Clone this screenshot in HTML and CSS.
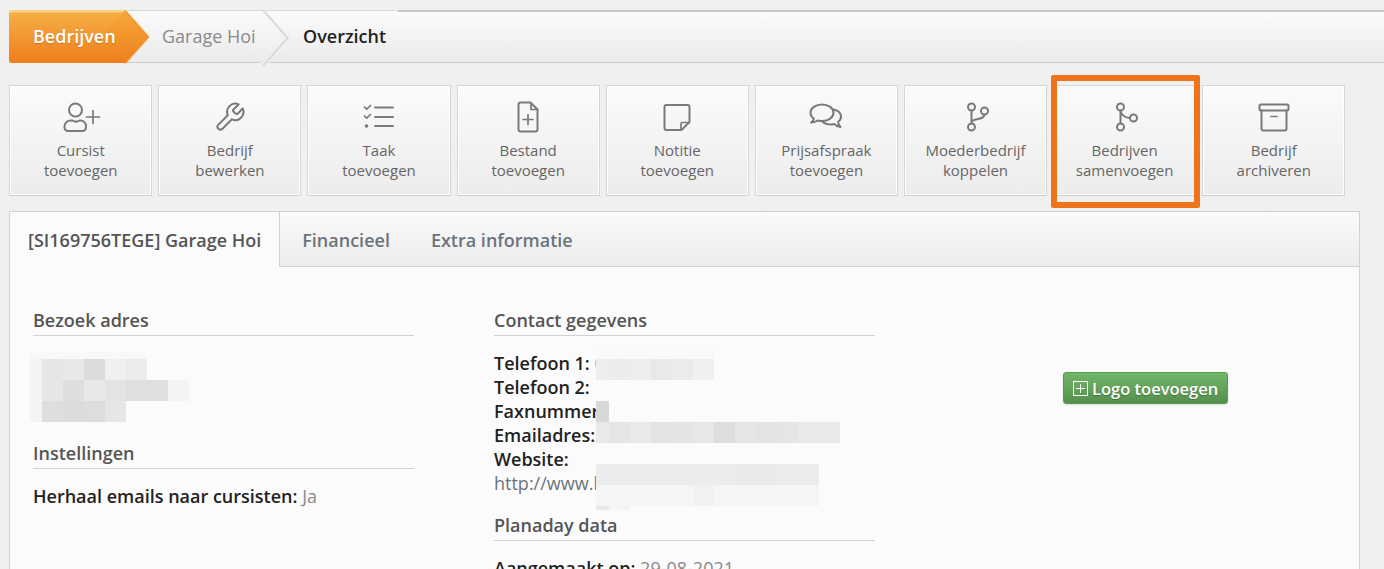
FILE: index.html
```html
<!DOCTYPE html>
<html lang="nl">
<head>
<meta charset="utf-8">
<title>Garage Hoi - Overzicht</title>
<link rel="stylesheet" href="styles.css">
</head>
<body>
<nav class="crumbs">
  <a class="crumb crumb-home">Bedrijven</a>
  <a class="crumb crumb-mid">Garage Hoi</a>
  <span class="crumb crumb-now">Overzicht</span>
</nav>

<div class="actions">
  <a class="action">
    <svg class="ico" viewBox="0 0 40 32"><circle cx="14.500" cy="9" r="6.500"/><path d="M7 30h14.500a3.500 3.500 0 0 0 3.500-3.500V25a5.500 5.500 0 0 0-5.500-5.500h-1c-2 1.300-5 1.300-7 0h-1.500A6 6 0 0 0 3.500 25v1.500A3.500 3.500 0 0 0 7 30z"/><path class="thin" d="M32 9.500v13M25.500 16h13"/></svg>
    <span>Cursist<br>toevoegen</span>
  </a>
  <a class="action">
    <svg class="ico" viewBox="0 0 40 32"><g transform="translate(3.500 0) scale(1.36)"><path class="w15" d="M14.700 6.300a1 1 0 0 0 0 1.400l1.600 1.600a1 1 0 0 0 1.400 0l3.770-3.770a6 6 0 0 1-7.940 7.940l-6.910 6.910a2.120 2.120 0 0 1-3-3l6.910-6.910a6 6 0 0 1 7.940-7.940l-3.760 3.760z"/></g></svg>
    <span>Bedrijf<br>bewerken</span>
  </a>
  <a class="action">
    <svg class="ico" viewBox="0 0 40 32"><path d="M16 6.500h18M16 16h18M16 25h18"/><path class="thin" d="M5.500 6l2.200 2.200L11.500 4.500M5.500 15l2.200 2.200L11.500 13.500"/><circle class="dot" cx="7.500" cy="25" r="1.800"/></svg>
    <span>Taak<br>toevoegen</span>
  </a>
  <a class="action">
    <svg class="ico" viewBox="0 0 40 32"><path d="M12.500 1.500h10l7 7v20a2 2 0 0 1-2 2h-15a2 2 0 0 1-2-2v-25a2 2 0 0 1 2-2z"/><path class="thin" d="M23 2v6.500h6.500M20 13.500v10M15 18.500h10"/></svg>
    <span>Bestand<br>toevoegen</span>
  </a>
  <a class="action">
    <svg class="ico" viewBox="0 0 40 32"><path d="M9.500 4h21a2 2 0 0 1 2 2v15l-8 8h-15a2 2 0 0 1-2-2V6a2 2 0 0 1 2-2z"/><path class="thin" d="M32 21.500h-6.500a1.500 1.500 0 0 0-1.500 1.500v6"/></svg>
    <span>Notitie<br>toevoegen</span>
  </a>
  <a class="action">
    <svg class="ico" viewBox="0 0 40 32"><path d="M16 3.500c-6.500 0-11.500 3.700-11.500 8.300 0 2.400 1.300 4.500 3.400 6-.3 1.400-1.400 2.800-2.900 3.700 2.500 0 4.800-.8 6.600-2 1.400.4 2.900.6 4.400.6 6.500 0 11.500-3.700 11.500-8.300S22.500 3.500 16 3.500z"/><path d="M27.800 8.500c4.200 1 7.200 3.900 7.200 7.300 0 2.100-1.100 3.900-2.900 5.200.2 1.900 1 3.500 2.400 5-2.500-.3-4.600-1.400-6.200-3-1.200.3-2.500.5-3.800.5-3 0-5.700-.9-7.600-2.400"/></svg>
    <span>Prijsafspraak<br>toevoegen</span>
  </a>
  <a class="action">
    <svg class="ico" viewBox="0 0 40 32"><circle cx="15.500" cy="6" r="3.500"/><circle cx="15.500" cy="26" r="3.500"/><circle cx="28.500" cy="10" r="3.500"/><path d="M15.500 9.500v13M15.500 21c1-2 3-2.500 5.500-2.800 4-.5 7-1.500 7.500-4.700"/></svg>
    <span>Moederbedrijf<br>koppelen</span>
  </a>
  <a class="action action-marked">
    <svg class="ico" viewBox="0 0 40 32"><circle cx="15.500" cy="6" r="3.500"/><circle cx="15.500" cy="26" r="3.500"/><circle cx="28.500" cy="17" r="3.500"/><path d="M15.500 9.500v13M15.500 9.500c.5 4 4 7 9.500 7.500"/></svg>
    <span>Bedrijven<br>samenvoegen</span>
    <i class="marker"></i>
  </a>
  <a class="action">
    <svg class="ico" viewBox="0 0 40 32"><rect x="5.500" y="3.500" width="29" height="6" rx="1.500"/><path d="M7.500 9.500v18a2 2 0 0 0 2 2h21a2 2 0 0 0 2-2v-18"/><path class="thin" d="M17 15.500h6"/></svg>
    <span>Bedrijf<br>archiveren</span>
  </a>
</div>

<section class="panel">
  <header class="tabs">
    <a class="tab tab-active">[SI169756TEGE] Garage Hoi</a>
    <a class="tab">Financieel</a>
    <a class="tab tab-last">Extra informatie</a>
  </header>
  <div class="panel-body">
    <div class="col">
      <h3 class="title">Bezoek adres</h3>
      <div class="address">
        <svg class="mosaic" width="159" height="70" shape-rendering="crispEdges">
          <rect width="117" height="7" fill="#f8f8f8"/>
          <rect y="7" width="12" height="63" fill="#f3f3f3"/>
          <rect x="12" y="7" width="21" height="21" fill="#e6e6e6"/>
          <rect x="33" y="7" width="21" height="21" fill="#e8e8e8"/>
          <rect x="54" y="7" width="21" height="21" fill="#dcdcdc"/>
          <rect x="75" y="7" width="21" height="21" fill="#f0f0f0"/>
          <rect x="96" y="7" width="21" height="21" fill="#ebebeb"/>
          <rect x="12" y="28" width="21" height="21" fill="#e6e6e6"/>
          <rect x="33" y="28" width="21" height="21" fill="#dedede"/>
          <rect x="54" y="28" width="21" height="21" fill="#e8e8e8"/>
          <rect x="75" y="28" width="21" height="21" fill="#e3e3e3"/>
          <rect x="96" y="28" width="42" height="21" fill="#dfdfdf"/>
          <rect x="138" y="28" width="21" height="21" fill="#f4f4f4"/>
          <rect x="12" y="49" width="21" height="21" fill="#dedede"/>
          <rect x="33" y="49" width="21" height="21" fill="#dcdcdc"/>
          <rect x="54" y="49" width="21" height="21" fill="#dddddd"/>
          <rect x="75" y="49" width="21" height="21" fill="#e6e6e6"/>
        </svg>
      </div>
      <h3 class="title">Instellingen</h3>
      <p class="row row-first"><b>Herhaal emails naar cursisten:</b> Ja</p>
    </div>

    <div class="col col-contact">
      <h3 class="title">Contact gegevens</h3>
      <div class="contact">
        <p class="row"><b>Telefoon 1:</b> 0</p>
        <p class="row"><b>Telefoon 2:</b></p>
        <p class="row"><b>Faxnummer:</b></p>
        <p class="row"><b>Emailadres:</b></p>
        <p class="row"><b>Website:</b></p>
        <p class="row"><a class="link">http://www.l</a></p>
        <svg class="mosaic mosaic-contact" width="244" height="160" shape-rendering="crispEdges">
          <rect y="0" width="118" height="8" fill="#f9f9f9"/>
          <rect y="8" width="13" height="21" fill="#eeeeee"/>
          <rect x="13" y="8" width="21" height="21" fill="#ececec"/>
          <rect x="34" y="8" width="21" height="21" fill="#eeeeee"/>
          <rect x="55" y="8" width="21" height="21" fill="#e9e9e9"/>
          <rect x="76" y="8" width="21" height="21" fill="#ebebeb"/>
          <rect x="97" y="8" width="21" height="21" fill="#f0f0f0"/>
          <rect y="29" width="13" height="21" fill="#fbfbfb"/>
          <rect y="50" width="13" height="21" fill="#d8d8d8"/>
          <rect y="71" width="13" height="21" fill="#e8e9e9"/>
          <rect x="13" y="71" width="21" height="21" fill="#e4e5e6"/>
          <rect x="34" y="71" width="21" height="21" fill="#e8e9e9"/>
          <rect x="55" y="71" width="21" height="21" fill="#e2e3e4"/>
          <rect x="76" y="71" width="21" height="21" fill="#e3e4e5"/>
          <rect x="97" y="71" width="21" height="21" fill="#e6e7e8"/>
          <rect x="118" y="71" width="21" height="21" fill="#dcddde"/>
          <rect x="139" y="71" width="21" height="21" fill="#e4e5e6"/>
          <rect x="160" y="71" width="21" height="21" fill="#e2e3e4"/>
          <rect x="181" y="71" width="21" height="21" fill="#e4e5e6"/>
          <rect x="202" y="71" width="21" height="21" fill="#e9eaea"/>
          <rect x="223" y="71" width="21" height="21" fill="#e8e9ea"/>
          <rect x="76" y="92" width="63" height="21" fill="#fbfbfb"/>
          <rect y="113" width="223" height="21" fill="#ebecee"/>
          <rect x="139" y="113" width="42" height="21" fill="#e8e9eb"/>
          <rect y="134" width="223" height="21" fill="#f4f5f5"/>
          <rect x="97" y="134" width="21" height="21" fill="#f0f1f3"/>
          <rect y="155" width="13" height="4" fill="#e8e8e8"/>
          <rect x="13" y="155" width="21" height="4" fill="#f4f4f4"/>
        </svg>
      </div>
      <h3 class="title">Planaday data</h3>
      <p class="row row-first"><b>Aangemaakt op:</b> 29-08-2021</p>
    </div>

    <div class="col col-logo">
      <a class="logo-btn">
        <svg class="logo-ico" viewBox="0 0 15 15"><rect x=".5" y=".5" width="14" height="14"/><path d="M7.500 3v9M3 7.500h9"/></svg>
        Logo toevoegen
      </a>
    </div>
  </div>
</section>
</body>
</html>
```

FILE: styles.css
```css
* { box-sizing: border-box; }
html, body { height: 100%; overflow: hidden; }
body {
  margin: 0;
  padding-top: 10px;
  background: #f0f0f0;
  font-family: "Open Sans", "Liberation Sans", sans-serif;
  color: #222;
}
p, h3 { margin: 0; }

/* breadcrumb */
.crumbs {
  display: flex;
  height: 53px;
  margin-left: 9px;
  background: linear-gradient(#fbfbfb, #ebebeb);
  border-top: 1px solid #d8d8d8;
  border-bottom: 1px solid #cfcfcf;
  font-size: 18px;
  line-height: 51px;
}
.crumb { position: relative; display: block; white-space: nowrap; }
.crumb-home {
  z-index: 2;
  margin: -1px 0;
  height: 53px;
  line-height: 53px;
  padding: 0 0 0 24px;
  width: 116px;
  background: linear-gradient(#fcd27e 0, #fcd27e 2px, #f7ae46 3px, #ee7d1c 100%);
  border-radius: 3px 0 0 3px;
  color: #fff;
  font-weight: 600;
  text-shadow: 0 1px 1px rgba(150, 80, 0, .4);
}
.crumb-home::after {
  content: "";
  position: absolute;
  z-index: -1;
  top: 7.500px;
  right: -19px;
  width: 38px;
  height: 38px;
  background: linear-gradient(135deg, #f6a93b, #ee7f1d);
  box-shadow: 1px -1px 0 #f8b669, inset -1px 1px 0 #ef8c2a;
  transform: scaleX(.88) rotate(45deg);
}
.crumb-mid {
  z-index: 1;
  width: 140px;
  padding-left: 37px;
  color: #8a8a8a;
}
.crumb-mid::after {
  content: "";
  position: absolute;
  z-index: -1;
  top: 6.500px;
  right: -19px;
  width: 38px;
  height: 38px;
  background: linear-gradient(135deg, #fbfbfb, #ebebeb);
  border-top: 2px solid #d8d8d8;
  border-right: 2px solid #d8d8d8;
  box-shadow: 1px -1px 0 #f4f4f4;
  transform: scaleX(.88) rotate(45deg);
}
.crumb-now {
  flex: 1;
  padding-left: 38px;
  color: #222;
  font-weight: 600;
}
.crumb-now::after {
  content: "";
  position: absolute;
  top: -1px;
  left: 133px;
  right: 0;
  height: 2px;
  background: #c6c6c6;
}

/* action buttons */
.actions {
  display: flex;
  gap: 6px;
  margin: 22px 0 0 9.200px;
}
.action {
  position: relative;
  flex: 0 0 143.125px;
  height: 111px;
  padding-top: 15px;
  text-align: center;
  background: linear-gradient(#fbfbfb, #ececec);
  border: 1px solid #d6d6d6;
  border-bottom-color: #cfcfcf;
  box-shadow: inset 1px 1px 0 #fff, inset -1px -1px 0 #fff;
  color: #666;
  font-size: 15px;
  line-height: 20px;
}
.action span { display: block; margin-top: 7px; }
.ico {
  display: block;
  width: 40px;
  height: 32px;
  margin: 0 auto;
  fill: none;
  stroke: #7a7a7a;
  stroke-width: 2;
  stroke-linecap: round;
  stroke-linejoin: round;
}
.ico .thin { stroke-width: 1.700; }
.ico .w15 { stroke-width: 1.500; }
.ico .dot { fill: #7a7a7a; stroke: none; }
.marker {
  position: absolute;
  left: -3px;
  top: -11px;
  width: 149px;
  height: 133px;
  border: 6px solid #ee741c;
  border-radius: 2px;
}

/* panel */
.panel {
  width: 1351px;
  margin: 15px 0 0 9px;
  background: #fbfbfb;
  border: 1px solid #d2d2d2;
}
.tabs {
  display: flex;
  height: 55px;
  background: linear-gradient(#fafafa, #ececec);
  font-size: 18px;
  font-weight: 600;
  line-height: 57px;
}
.tab {
  padding: 0 20px 0 22px;
  color: #6b747c;
  border-bottom: 1px solid #d2d2d2;
  white-space: nowrap;
}
.tab-active {
  padding: 0 18px;
  background: #fbfbfb;
  border-right: 1px solid #d2d2d2;
  border-bottom: 0;
  color: #555;
}
.tab-last { flex: 1; padding-left: 21px; }
.panel-body {
  display: flex;
  gap: 80px;
  padding: 41px 23px 0 23px;
  height: 400px;
}
.col { flex: 0 0 381px; }
.title {
  height: 28px;
  padding-bottom: 3px;
  border-bottom: 1px solid #d2d2d2;
  color: #555;
  font-size: 18px;
  font-weight: 600;
  line-height: 24px;
}
.address { height: 105px; padding-top: 16px; margin-left: -3px; }
.mosaic { display: block; }
.row {
  font-size: 18px;
  line-height: 24px;
  color: #8a8a8a;
  white-space: nowrap;
}
.row b { color: #222; font-weight: 600; }
.row-first { margin-top: 15px; }
.contact {
  position: relative;
  padding: 15px 0 18px;
}
.link { color: #6b747c; }
.mosaic-contact {
  position: absolute;
  left: 102px;
  top: 15px;
}
.col-logo {
  display: flex;
  justify-content: center;
  padding-top: 64px;
}
.logo-btn {
  display: flex;
  align-items: center;
  gap: 4px;
  width: 165px;
  height: 32px;
  padding-left: 9px;
  background: linear-gradient(#70b667, #578f4f);
  border: 1px solid #579a4f;
  border-radius: 3px;
  box-shadow: 0 1px 2px rgba(0, 0, 0, .12);
  color: #fff;
  font-size: 16.500px;
  font-weight: 600;
  text-shadow: 0 1px 1px rgba(0, 0, 0, .25);
}
.logo-ico {
  flex: 0 0 15px;
  width: 15px;
  height: 15px;
  fill: none;
  stroke: #fff;
  stroke-width: 1;
}
```
